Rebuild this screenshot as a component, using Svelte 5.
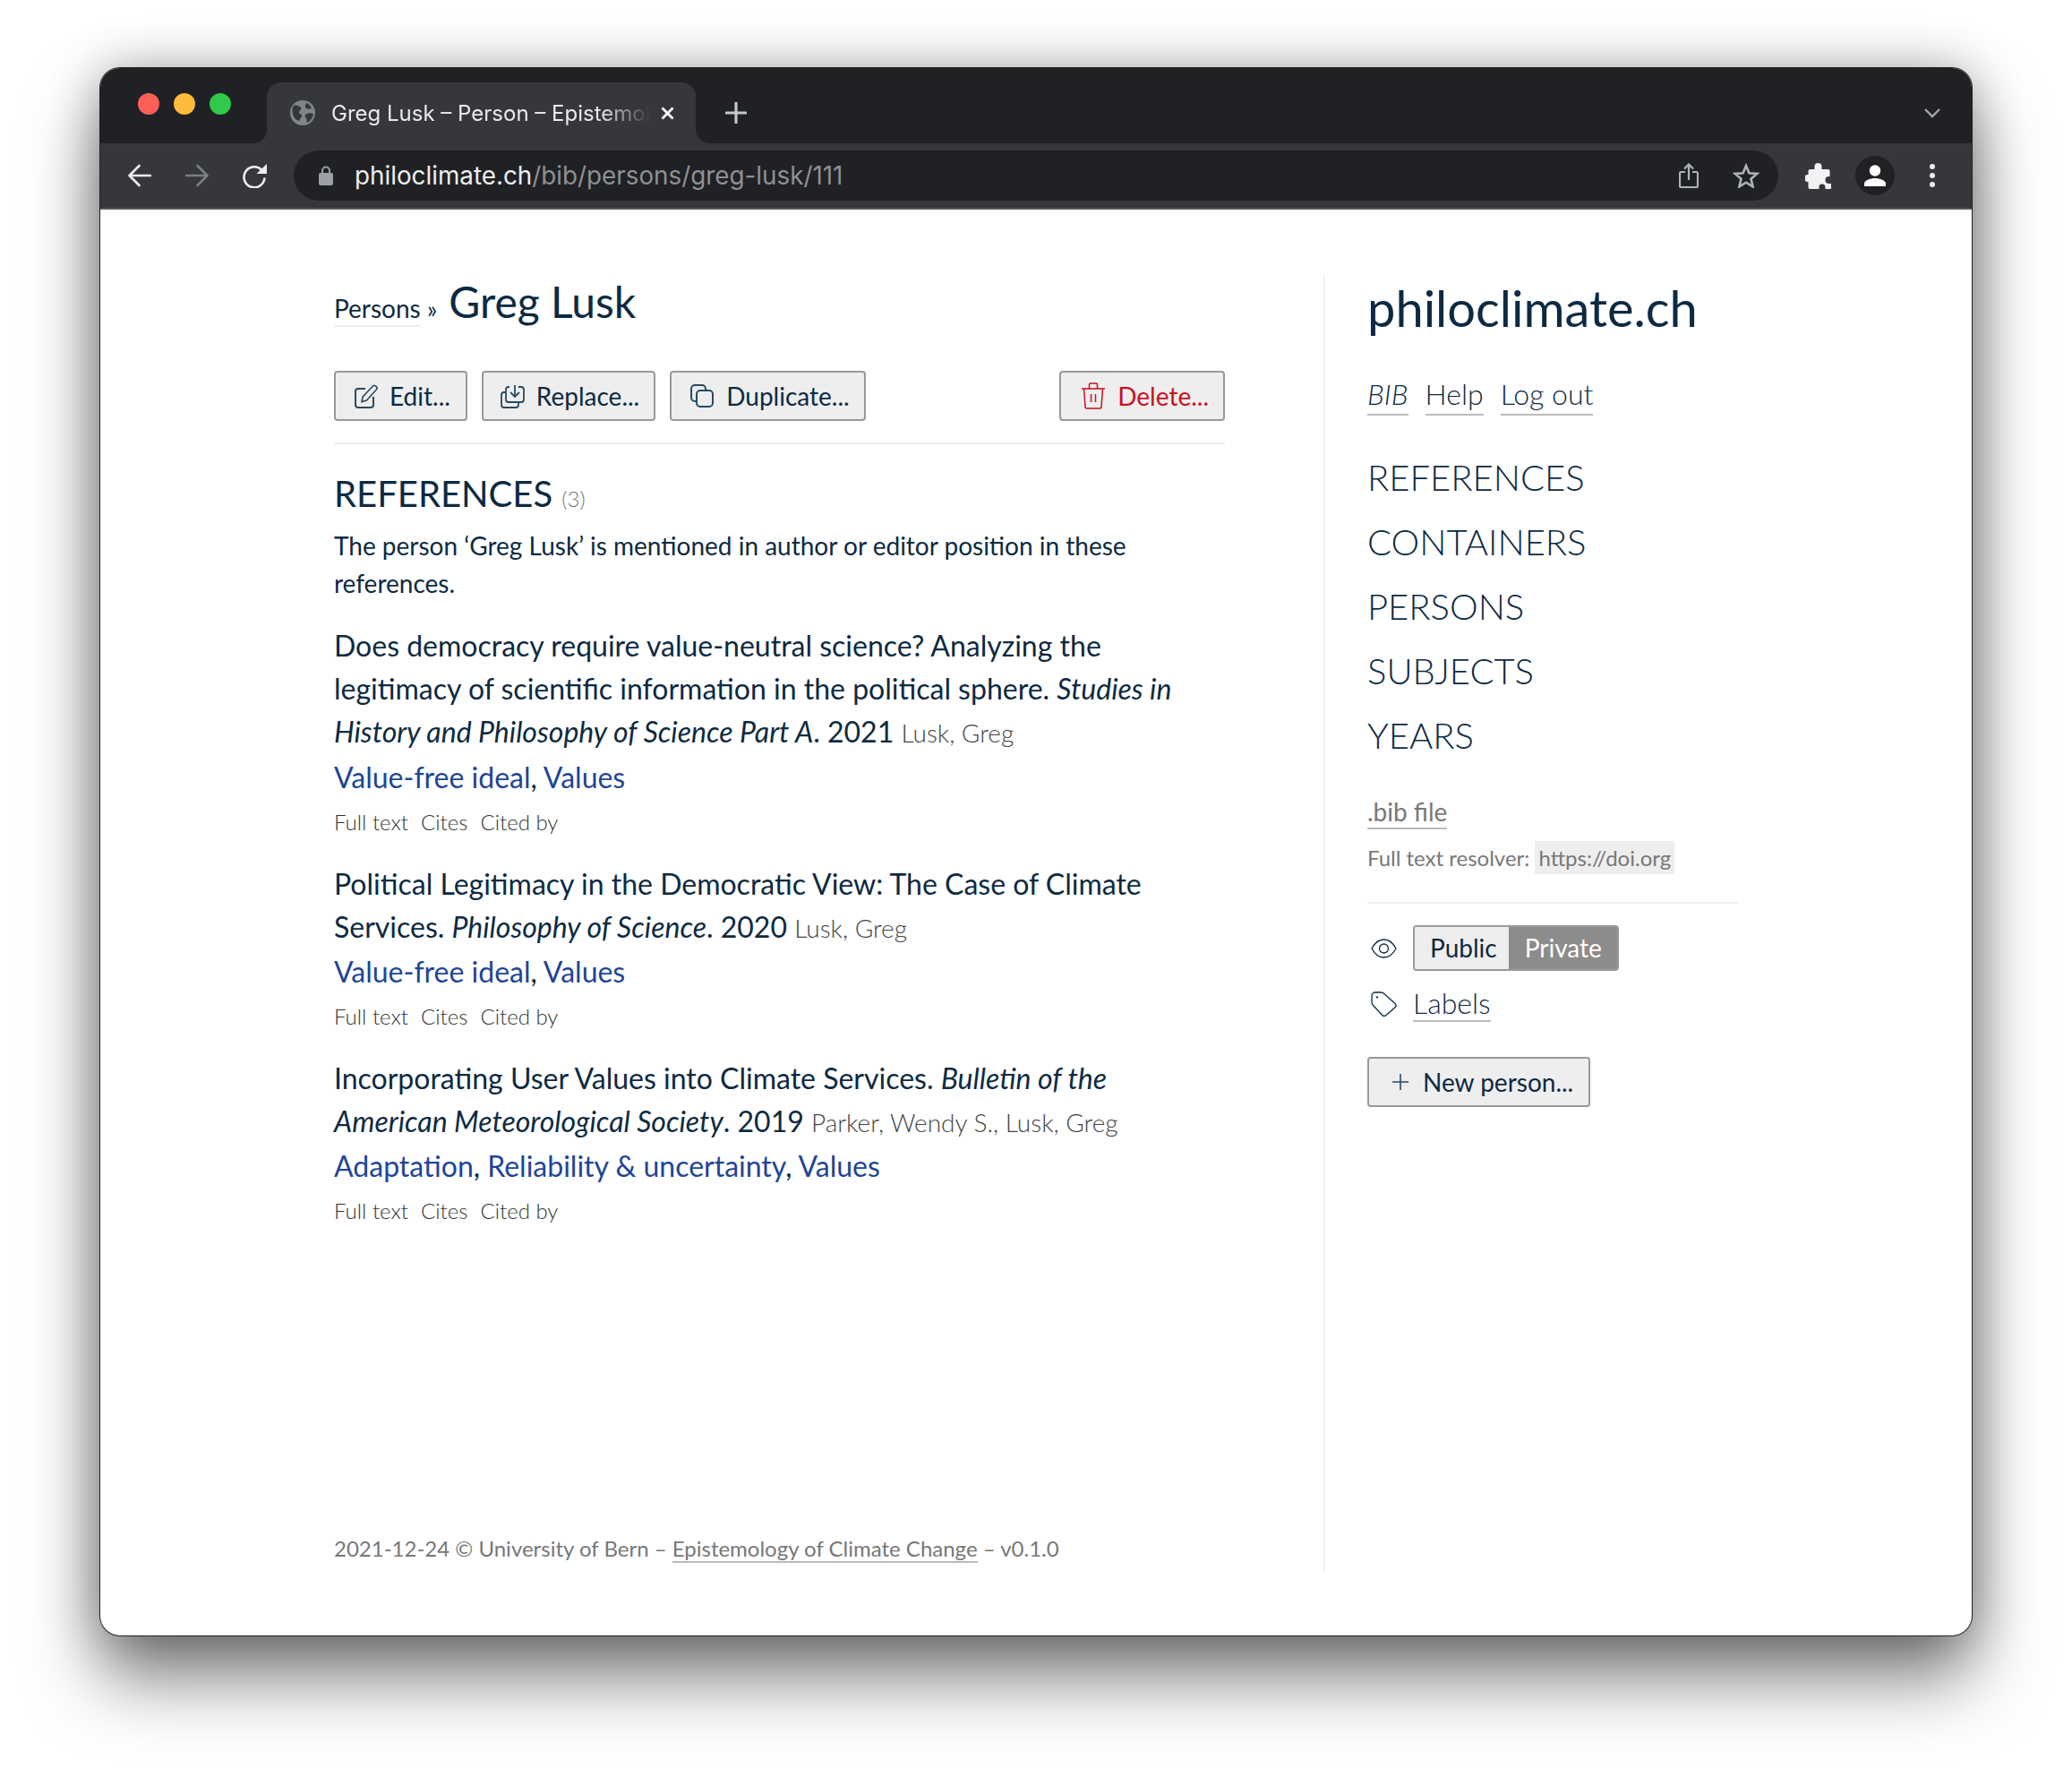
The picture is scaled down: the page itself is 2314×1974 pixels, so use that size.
<script>
  const nav = ['REFERENCES', 'CONTAINERS', 'PERSONS', 'SUBJECTS', 'YEARS'];

  const refs = [
    {
      title: 'Does democracy require value-neutral science? Analyzing the legitimacy of scientific information in the political sphere.',
      journal: 'Studies in History and Philosophy of Science Part A',
      year: 2021,
      authors: 'Lusk, Greg',
      tags: ['Value-free ideal', 'Values']
    },
    {
      title: 'Political Legitimacy in the Democratic View: The Case of Climate Services.',
      journal: 'Philosophy of Science',
      year: 2020,
      authors: 'Lusk, Greg',
      tags: ['Value-free ideal', 'Values']
    },
    {
      title: 'Incorporating User Values into Climate Services.',
      journal: 'Bulletin of the American Meteorological Society',
      year: 2019,
      authors: 'Parker, Wendy S., Lusk, Greg',
      tags: ['Adaptation', 'Reliability & uncertainty', 'Values']
    }
  ];
</script>

<div class="desktop">
  <div class="window">
    <div class="tabstrip">
      <div class="lights">
        <span class="light red"></span>
        <span class="light yellow"></span>
        <span class="light green"></span>
      </div>
      <div class="tab">
        <svg class="globe" width="28" height="28" viewBox="0 0 28 28">
          <circle cx="14" cy="14" r="14" fill="#80858b" />
          <path d="M4 6c3-1 6 0 8 2 1 2-1 3-2 5s3 2 3 4-2 3-3 6C6 22 4 19 3 15 2 12 2 9 4 6zM18 3c3 1 5 3 6 6-2 1-4 1-6 0s-1-4 0-6zM17 16c3-2 6-2 9-1-1 5-3 8-7 10-1-2 0-4-1-5s-2-2-1-4z" fill="#36373b" />
        </svg>
        <span class="tab-title">Greg Lusk – Person – Epistemology of Climate Change</span>
        <svg class="tab-close" width="15" height="15" viewBox="0 0 15 15">
          <path d="M1.500 1.500l12 12M13.500 1.500l-12 12" stroke="#fff" stroke-width="2.800" />
        </svg>
      </div>
      <svg class="newtab" width="24" height="24" viewBox="0 0 24 24">
        <path d="M12 1v22M1 12h22" stroke="#c4c7c9" stroke-width="3.200" stroke-linecap="round" />
      </svg>
      <svg class="chevron" width="18" height="11" viewBox="0 0 18 11">
        <path d="M1 1l8 8 8-8" fill="none" stroke="#a5a8ab" stroke-width="2.400" />
      </svg>
    </div>

    <div class="toolbar">
      <svg class="nav-icon" width="26" height="26" viewBox="0 0 26 26">
        <path d="M25 13H2M12.500 2L1.500 13l11 11" fill="none" stroke="#eceef0" stroke-width="2.600" stroke-linecap="round" stroke-linejoin="round" />
      </svg>
      <svg class="nav-icon" width="26" height="26" viewBox="0 0 26 26">
        <path d="M1 13h23M13.500 2l11 11-11 11" fill="none" stroke="#7b7e82" stroke-width="2.600" stroke-linecap="round" stroke-linejoin="round" />
      </svg>
      <svg class="nav-icon reload" width="27" height="27" viewBox="0 0 27 27">
        <path d="M21 6.500a11.500 11.500 0 1 0 3.500 9" fill="none" stroke="#eceef0" stroke-width="2.600" />
        <path d="M27 0v11H15.500z" fill="#eceef0" />
      </svg>
      <div class="urlbar">
        <svg class="lock" width="16" height="22" viewBox="0 0 16 22">
          <path d="M4 9V5.500a4 4 0 0 1 8 0V9" fill="none" stroke="#9aa0a6" stroke-width="2" />
          <rect x="0" y="8" width="16" height="14" rx="2" fill="#9aa0a6" />
        </svg>
        <span class="url"><span class="host">philoclimate.ch</span>/bib/persons/greg-lusk/111</span>
        <svg width="22" height="28" viewBox="0 0 22 28">
          <path d="M7 10H2.500A1.500 1.500 0 0 0 1 11.500v14A1.500 1.500 0 0 0 2.500 27h17a1.500 1.500 0 0 0 1.500-1.500v-14a1.500 1.500 0 0 0-1.500-1.500H15M11 19V1.500M6 6.500l5-5 5 5" fill="none" stroke="#b0b3b6" stroke-width="2.200" />
        </svg>
        <svg class="star" width="30" height="28" viewBox="0 0 30 28">
          <path d="M15 3l3.400 8.200 8.900.700-6.800 5.800 2.100 8.700L15 21.700l-7.600 4.700 2.100-8.700-6.800-5.800 8.900-.700z" fill="none" stroke="#b0b3b6" stroke-width="2.600" />
        </svg>
      </div>
      <svg class="puzzle" width="29" height="29" viewBox="0 0 29 29">
        <path d="M10 4a4 4 0 0 1 8 0v3h7a2 2 0 0 1 2 2v6h-1a4 4 0 0 0 0 8h3v4a2 2 0 0 1-2 2h-5v-2a3.500 3.500 0 0 0-7 0v2H5a2 2 0 0 1-2-2v-6h-.5a4 4 0 0 1 0-8H3V9a2 2 0 0 1 2-2h5z" fill="#f1f3f4" transform="translate(0.500 0)" />
      </svg>
      <div class="avatar">
        <svg width="24" height="24" viewBox="0 0 24 24">
          <circle cx="12" cy="6.500" r="6.200" fill="#fff" />
          <path d="M0 24v-3c0-4 8-6 12-6s12 2 12 6v3z" fill="#fff" />
        </svg>
      </div>
      <div class="kebab"><span></span><span></span><span></span></div>
    </div>

    <div class="page">
      <main class="main">
        <div class="crumb">
          <a class="crumb-link" href="#p">Persons</a> <span class="raquo">»</span>
          <h1>Greg Lusk</h1>
        </div>

        <div class="actions">
          <button class="btn">
            <svg width="26" height="27" viewBox="0 0 26 27" fill="none" stroke-width="2">
              <path d="M12 5H4a3 3 0 0 0-3 3v15a3 3 0 0 0 3 3h14a3 3 0 0 0 3-3v-9" stroke="#2b4a60" />
              <path d="M8 19.500l1.200-5.500L20 2.500c1-1.200 2.800-1.300 4-.200s1.200 2.900.200 4L13.400 18z" stroke="#2b4a60" stroke-width="1.600" />
            </svg>
            Edit...
          </button>
          <button class="btn replace">
            <svg width="27" height="27" viewBox="0 0 27 27" fill="none" stroke="#2b4a60" stroke-width="1.800">
              <path d="M6 9V6a3 3 0 0 1 3-3h1M20 3h3a3 3 0 0 1 3 3v11a3 3 0 0 1-3 3H9a3 3 0 0 1-3-3V9" />
              <path d="M6 9H4a3 3 0 0 0-3 3v11a3 3 0 0 0 3 3h13a3 3 0 0 0 3-3v-3" />
              <path d="M16 1v12M11 9l5 5 5-5" />
            </svg>
            Replace...
          </button>
          <button class="btn wide-gap">
            <svg width="26" height="26" viewBox="0 0 26 26" fill="none" stroke="#2b4a60" stroke-width="2">
              <path d="M7 19H5a4 4 0 0 1-4-4V5a4 4 0 0 1 4-4h8a4 4 0 0 1 4 4v2" />
              <rect x="7" y="7" width="18" height="18" rx="4" />
            </svg>
            Duplicate...
          </button>
          <button class="btn danger wide-gap">
            <svg width="26" height="30" viewBox="0 0 26 30" fill="none" stroke="currentColor" stroke-width="1.500">
              <path d="M0 7h26M8.500 7V2.500A1.500 1.500 0 0 1 10 1h6a1.500 1.500 0 0 1 1.500 1.500V7M2.500 7l1.500 20a2 2 0 0 0 2 2h14a2 2 0 0 0 2-2l1.500-20M10.500 13v9M15.500 13v9" />
            </svg>
            Delete...
          </button>
        </div>

        <h2>REFERENCES <small>(3)</small></h2>
        <p class="intro">The person ‘Greg Lusk’ is mentioned in author or editor position in these references.</p>

        {#each refs as ref}
          <article class="ref">
            <div class="cite">
              {ref.title} <em>{ref.journal}</em>. {ref.year} <span class="authors">{ref.authors}</span>
            </div>
            <div class="tags">
              {#each ref.tags as tag, i}<a href="#t">{tag}</a>{i < ref.tags.length - 1 ? ', ' : ''}{/each}
            </div>
            <div class="links"><span>Full text</span><span>Cites</span><span>Cited by</span></div>
          </article>
        {/each}

        <footer class="footer">
          2021-12-24 © University of Bern – <a href="#e">Epistemology of Climate Change</a> – v0.1.0
        </footer>
      </main>

      <aside class="side">
        <div class="brand">philoclimate.ch</div>
        <div class="toplinks">
          <a href="#b"><em>BIB</em></a>
          <a href="#h">Help</a>
          <a href="#l">Log out</a>
        </div>
        <nav class="sidenav">
          {#each nav as item}
            <div>{item}</div>
          {/each}
        </nav>
        <a class="bibfile" href="#f">.bib file</a>
        <div class="resolver">Full text resolver: <code>https://doi.org</code></div>
        <hr />
        <div class="row">
          <svg class="row-icon" width="29" height="22" viewBox="0 0 29 22" fill="none" stroke="#0d2a42" stroke-width="1.300">
            <path d="M1 11C4.500 4.500 9.500 1 14.500 1S24.500 4.500 28 11c-3.500 6.500-8.500 10-13.500 10S4.500 17.500 1 11z" />
            <circle cx="14.500" cy="11" r="5" />
          </svg>
          <div class="toggle"><span class="on">Public</span><span class="off">Private</span></div>
        </div>
        <div class="row labels">
          <svg class="row-icon" width="29" height="28" viewBox="0 0 29 28" fill="none" stroke="#0d2a42" stroke-width="1.300">
            <path d="M5 1h6c1.500 0 2.800.500 3.800 1.500L27 13.500c1.300 1.200 1.300 2.800.200 4L17 26.500c-1.300 1.200-3 1.200-4.200 0L2.500 15.500C1.500 14.500 1 13.500 1 12V5a4 4 0 0 1 4-4z" />
            <circle cx="7" cy="6.500" r=".5" />
          </svg>
          <a href="#l">Labels</a>
        </div>
        <button class="btn newperson">
          <svg width="18" height="18" viewBox="0 0 18 18"><path d="M9 0v18M0 9h18" stroke="#2b4a60" stroke-width="1.600" /></svg>
          New person...
        </button>
      </aside>
    </div>
  </div>
</div>

<style>
  :global(body) {
    margin: 0;
    background: #fff;
  }

  a {
    color: inherit;
    text-decoration: none;
  }

  .desktop {
    box-sizing: border-box;
    height: 1974px;
    padding: 76px 0 0 112px;
    overflow: hidden;
  }

  .window {
    width: 2090px;
    height: 1750px;
    background: #fff;
    border-radius: 22px;
    font-family: Lato, sans-serif;
    color: #0d2a42;
    box-shadow: 0 0 0 1px #222, 0 48px 80px rgba(0, 0, 0, 0.5), 0 0 56px rgba(0, 0, 0, 0.3);
  }

  .tabstrip {
    display: flex;
    align-items: center;
    height: 84px;
    background: #202124;
    border-radius: 22px 22px 0 0;
  }

  .lights {
    display: flex;
    gap: 16px;
    margin: -4px 0 0 42px;
  }

  .light {
    width: 24px;
    height: 24px;
    border-radius: 50%;
  }

  .red { background: #ff5f57; }
  .yellow { background: #febc3a; }
  .green { background: #32c84a; }

  .tab {
    position: relative;
    display: flex;
    align-items: center;
    align-self: flex-end;
    box-sizing: border-box;
    width: 479px;
    height: 68px;
    margin-left: 40px;
    padding: 0 24px 0 26px;
    background: #36373b;
    border-radius: 16px 16px 0 0;
    font-family: Inter, sans-serif;
    font-size: 24px;
    color: #e8eaed;
  }

  .tab::before,
  .tab::after {
    content: '';
    position: absolute;
    bottom: 0;
    width: 16px;
    height: 16px;
  }

  .tab::before {
    left: -16px;
    background: radial-gradient(circle at 0 0, transparent 16px, #36373b 16.500px);
  }

  .tab::after {
    right: -16px;
    background: radial-gradient(circle at 100% 0, transparent 16px, #36373b 16.500px);
  }

  .globe {
    flex: none;
    margin-right: 18px;
  }

  .tab-title {
    flex: 1;
    overflow: hidden;
    white-space: nowrap;
    -webkit-mask-image: linear-gradient(to right, #000 84%, transparent 100%);
    mask-image: linear-gradient(to right, #000 84%, transparent 100%);
  }

  .tab-close {
    flex: none;
    margin-left: 12px;
  }

  .newtab {
    margin: 16px 0 0 33px;
  }

  .chevron {
    margin: 16px 35px 0 auto;
  }

  .toolbar {
    display: flex;
    align-items: center;
    box-sizing: border-box;
    height: 74px;
    padding-left: 31px;
    background: #36373b;
    border-bottom: 2px solid #55565a;
  }

  .nav-icon {
    flex: none;
    margin-right: 38px;
  }

  .reload {
    margin-right: 30px;
  }

  .urlbar {
    display: flex;
    align-items: center;
    box-sizing: border-box;
    width: 1658px;
    height: 56px;
    padding: 0 21px 0 28px;
    background: #202124;
    border-radius: 28px;
  }

  .lock {
    flex: none;
    margin-right: 24px;
  }

  .url {
    flex: 1;
    font-family: Inter, sans-serif;
    font-size: 27.800px;
    color: #8d9094;
  }

  .host {
    color: #eceef0;
  }

  .star {
    margin-left: 38px;
  }

  .puzzle {
    margin-left: 30px;
  }

  .avatar {
    display: flex;
    align-items: center;
    justify-content: center;
    width: 44px;
    height: 44px;
    margin-left: 27px;
    background: #202124;
    border-radius: 50%;
  }

  .kebab {
    display: flex;
    flex-direction: column;
    gap: 4px;
    margin-left: 39px;
  }

  .kebab span {
    width: 6px;
    height: 6px;
    background: #eceef0;
    border-radius: 50%;
  }

  .page {
    display: flex;
    height: 1447px;
    margin-top: 74px;
    padding-left: 261px;
  }

  .main {
    display: flex;
    flex-direction: column;
    width: 995px;
  }

  .crumb {
    height: 64px;
    margin-top: -3px;
    margin-bottom: -2px;
    font-size: 28px;
    line-height: 64px;
  }

  .crumb-link {
    border-bottom: 2px solid #eee;
    padding-bottom: 2px;
  }

  .raquo {
    font-size: 26px;
  }

  h1 {
    display: inline;
    margin: 0 0 0 6px;
    font-size: 48px;
    font-weight: 400;
  }

  .actions {
    display: flex;
    gap: 16px;
    margin-top: 47px;
    padding-bottom: 24px;
    border-bottom: 2px solid #eee;
  }

  .btn {
    display: flex;
    align-items: center;
    gap: 13px;
    box-sizing: border-box;
    height: 56px;
    padding: 0 17px 0 21px;
    background: #eee;
    border: 2px solid #999;
    border-radius: 4px;
    font-family: Lato, sans-serif;
    font-size: 28px;
    color: #0d2a42;
  }

  .replace {
    padding: 0 16px 0 19px;
  }

  .wide-gap {
    gap: 14px;
    padding-right: 16px;
  }

  .danger {
    margin-left: auto;
    padding-left: 23px;
    color: #c8101f;
  }

  h2 {
    margin: 30px 0 0;
    font-size: 40px;
    font-weight: 400;
    line-height: 50px;
  }

  h2 small {
    font-size: 24px;
    font-weight: 300;
    color: #777;
  }

  .intro {
    margin: 6px 0 0;
    font-size: 28px;
    line-height: 42px;
  }

  .ref {
    margin-top: 25px;
  }

  .cite {
    font-size: 32px;
    line-height: 48.200px;
  }

  .authors {
    font-size: 28px;
    font-weight: 300;
    color: #444;
  }

  .tags {
    font-size: 32px;
    line-height: 49px;
  }

  .tags a {
    color: #1e4597;
  }

  .links {
    display: flex;
    gap: 14px;
    margin-top: 6px;
    font-size: 24px;
    line-height: 40px;
    font-weight: 300;
    color: #333;
  }

  .footer {
    margin-top: auto;
    margin-bottom: 8px;
    font-size: 24px;
    line-height: 36px;
    color: #777;
  }

  .footer a {
    border-bottom: 2px solid #bbb;
  }

  .side {
    box-sizing: border-box;
    width: 462px;
    margin-left: 110px;
    padding-left: 47px;
    border-left: 2px solid #eee;
  }

  .brand {
    font-size: 56px;
    line-height: 72px;
  }

  .toplinks {
    display: flex;
    gap: 19px;
    margin-top: 38px;
    font-size: 32px;
    font-weight: 300;
    line-height: 44px;
  }

  .toplinks a {
    border-bottom: 2px solid #bbb;
  }

  .sidenav {
    margin-top: 33px;
    font-size: 40px;
    font-weight: 300;
    line-height: 72px;
  }

  .bibfile {
    display: inline-block;
    margin-top: 31px;
    font-size: 28px;
    line-height: 36px;
    color: #777;
    border-bottom: 2px solid #bbb;
  }

  .resolver {
    margin-top: 13px;
    font-size: 24px;
    line-height: 38px;
    color: #777;
  }

  code {
    padding: 4px;
    font-family: Lato, sans-serif;
    background: #eee;
  }

  hr {
    width: 414px;
    margin: 30px 0 0;
    border: 0;
    border-top: 2px solid #eee;
  }

  .row {
    display: flex;
    align-items: center;
    gap: 18px;
    margin-top: 24px;
  }

  .row-icon {
    flex: none;
    margin-left: 4px;
  }

  .toggle {
    display: flex;
    box-sizing: border-box;
    height: 51px;
    border: 2px solid #999;
    border-radius: 4px;
    overflow: hidden;
    font-size: 28px;
    line-height: 47px;
  }

  .on {
    padding: 0 13px 0 17px;
    background: #eee;
  }

  .off {
    padding: 0 17px 0 18px;
    background: #8c8c8c;
    color: #fff;
  }

  .labels {
    margin-top: 16px;
    font-size: 32px;
    font-weight: 300;
  }

  .labels a {
    border-bottom: 2px solid #bbb;
  }

  .newperson {
    margin-top: 39px;
    gap: 16px;
    padding: 0 17px 0 26px;
  }
</style>
